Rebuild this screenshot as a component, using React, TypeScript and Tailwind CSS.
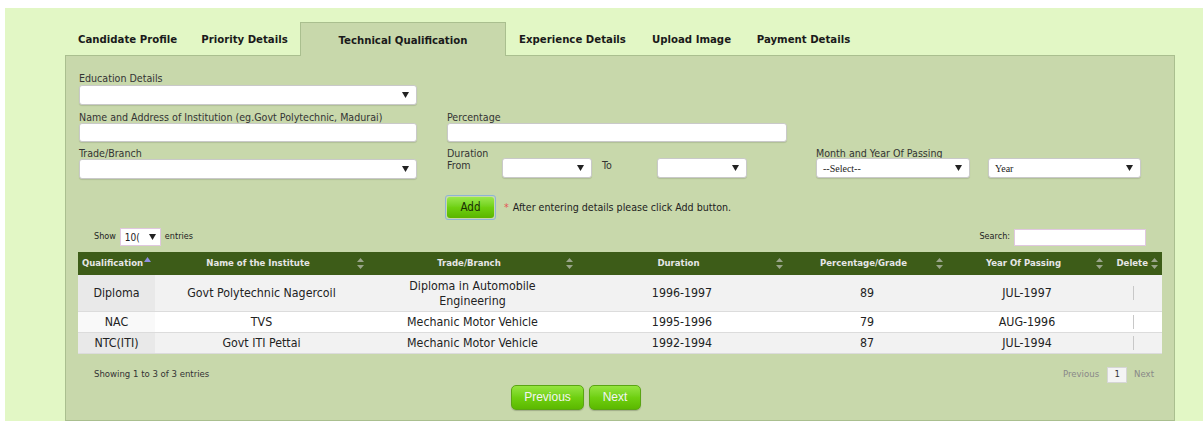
import React from 'react';

const font = { fontFamily: '"DejaVu Sans Condensed", "DejaVu Sans", Tahoma, sans-serif' };

const tabs = [
  { label: 'Candidate Profile', w: 'w-[123px]' },
  { label: 'Priority Details', w: 'w-[111px]' },
  { label: 'Technical Qualification', w: 'w-[206px]', active: true },
  { label: 'Experience Details', w: 'w-[133px]' },
  { label: 'Upload Image', w: 'w-[105px]' },
  { label: 'Payment Details', w: 'w-[119px]' },
];

const rows = [
  { q: 'Diploma', inst: 'Govt Polytechnic Nagercoil', trade: 'Diploma in Automobile Engineering', dur: '1996-1997', pct: '89', year: 'JUL-1997' },
  { q: 'NAC', inst: 'TVS', trade: 'Mechanic Motor Vehicle', dur: '1995-1996', pct: '79', year: 'AUG-1996' },
  { q: 'NTC(ITI)', inst: 'Govt ITI Pettai', trade: 'Mechanic Motor Vehicle', dur: '1992-1994', pct: '87', year: 'JUL-1994' },
];

function Arrow() {
  return (
    <svg width="7" height="6" viewBox="0 0 7 6" className="shrink-0">
      <path d="M0 0h7L3.5 6z" fill="#222" />
    </svg>
  );
}

function SortIcon() {
  return (
    <svg width="7" height="11" viewBox="0 0 7 11" className="shrink-0">
      <path d="M3.5 0L7 4H0z" fill="#9aa58a" />
      <path d="M0 7h7L3.5 11z" fill="#9aa58a" />
    </svg>
  );
}

function Select({ w, text, serif }: { w: string; text?: string; serif?: boolean }) {
  return (
    <div className={`${w} h-[20px] bg-white border border-[#c9c9c9] rounded-[3px] shadow-[0_1px_1px_rgba(0,0,0,0.12)] flex items-center pl-[6px] pr-[7px] justify-between`}>
      <span
        className="text-[10px] text-[#222]"
        style={serif ? { fontFamily: '"Liberation Serif", "DejaVu Serif", serif' } : undefined}
      >
        {text}
      </span>
      <Arrow />
    </div>
  );
}

function Input({ w }: { w: string }) {
  return <div className={`${w} h-[19px] bg-white border border-[#c9c9c9] rounded-[3px] shadow-[0_1px_1px_rgba(0,0,0,0.12)]`} />;
}

function Label({ children }: { children: React.ReactNode }) {
  return <div className="text-[10.6px] leading-[12px] text-[#333]">{children}</div>;
}

function GreenButton({ children, w }: { children: React.ReactNode; w: string }) {
  return (
    <div
      className={`${w} h-[25px] rounded-[5px] bg-gradient-to-b from-[#95e53e] via-[#6fd010] to-[#5bb800] border border-[#5aa514] flex items-center justify-center text-[12px] text-[#f4f4f4] shadow-[0_1px_1px_rgba(0,0,0,0.2)]`}
      style={{ fontFamily: '"Liberation Sans", Arial, sans-serif' }}
    >
      {children}
    </div>
  );
}

export default function App() {
  return (
    <div className="bg-white w-[1203px] h-[421px] pt-[8px] pl-[5px] overflow-hidden" style={font}>
      <div className="bg-[#e2f7c5] h-[413px] pl-[60px] pt-[14px]">
        {/* tab strip */}
        <div className="flex h-[33px] items-stretch">
          <div className="w-[1px]" />
          {tabs.map((t) =>
            t.active ? (
              <div key={t.label} className={`${t.w} bg-[#c8d8ab] border border-b-0 border-[#aabf8f] flex items-center justify-center pt-[4px] text-[11.3px] font-bold text-[#1a1a1a] relative z-10 -mb-[1px]`}>
                {t.label}
              </div>
            ) : (
              <div key={t.label} className={`${t.w} flex items-center justify-center pt-[4px] text-[11.3px] font-bold text-[#1a1a1a]`}>
                {t.label}
              </div>
            )
          )}
        </div>

        {/* panel */}
        <div className="w-[1110px] h-[366px] bg-[#c8d8ab] border border-[#aabf8f] px-[12px] pt-[16px]">
          <div className="pl-[1px]">
            <Label>Education Details</Label>
            <div className="mt-[1px]">
              <Select w="w-[338px]" />
            </div>

            <div className="flex mt-[6px]">
              <div className="w-[368px]">
                <Label>Name and Address of Institution (eg.Govt Polytechnic, Madurai)</Label>
                <Input w="w-[338px]" />
              </div>
              <div>
                <Label>Percentage</Label>
                <Input w="w-[340px]" />
              </div>
            </div>

            <div className="flex mt-[5px]">
              <div className="w-[368px]">
                <Label>Trade/Branch</Label>
                <Select w="w-[338px]" />
              </div>
              <div className="w-[369px]">
                <Label>Duration</Label>
                <div className="flex items-start -mt-[1px]">
                  <div className="w-[55px] pt-[1px]">
                    <Label>From</Label>
                  </div>
                  <Select w="w-[90px]" />
                  <div className="w-[65px] pl-[10px] pt-[1px]">
                    <Label>To</Label>
                  </div>
                  <Select w="w-[90px]" />
                </div>
              </div>
              <div>
                <Label>Month and Year Of Passing</Label>
                <div className="flex -mt-[1px] gap-[18px]">
                  <Select w="w-[154px]" text="--Select--" serif />
                  <Select w="w-[153px]" text="Year" serif />
                </div>
              </div>
            </div>

            {/* add row */}
            <div className="flex items-center mt-[16px] ml-[366px]">
              <div className="border border-[#8eb3d6] rounded-[3px] p-[1px]">
                <div className="w-[47px] h-[21px] rounded-[3px] bg-gradient-to-b from-[#9ae84a] via-[#6fd010] to-[#5ab500] flex items-center justify-center text-[11.5px] text-[#1a2e05]">
                  Add
                </div>
              </div>
              <span className="ml-[8px] text-[#e25555] text-[10.6px]">*</span>
              <span className="ml-[4px] text-[10.6px] text-[#222]">After entering details please click Add button.</span>
            </div>
          </div>

          {/* entries / search */}
          <div className="flex items-center justify-between mt-[8px] h-[18px] pl-[16px] pr-[16px] text-[9px] text-[#222]">
            <div className="flex items-center">
              <span>Show</span>
              <div className="ml-[4px] w-[41px] h-[18px] bg-white border border-[#e0c8e0] flex items-center justify-between px-[4px]">
                <span className="text-[10px]">10(</span>
                <Arrow />
              </div>
              <span className="ml-[4px]">entries</span>
            </div>
            <div className="flex items-center">
              <span>Search:</span>
              <div className="ml-[4px] w-[132px] h-[17px] bg-white border border-[#e0c8e0]" />
            </div>
          </div>

          {/* table */}
          <table className="mt-[6px] w-[1084px] border-collapse table-fixed">
            <colgroup>
              <col className="w-[77px]" />
              <col className="w-[213px]" />
              <col className="w-[209px]" />
              <col className="w-[210px]" />
              <col className="w-[160px]" />
              <col className="w-[160px]" />
              <col className="w-[55px]" />
            </colgroup>
            <thead>
              <tr className="bg-[#3d5c18] h-[23px] text-[9.5px] font-bold text-[#e6e6e6]">
                <th className="pl-[4px] text-left">
                  <div className="flex items-start gap-[1px]">
                    <span>Qualification</span>
                    <svg width="7" height="6" viewBox="0 0 7 6" className="mt-[1px]">
                      <path d="M3.5 0L7 5H0z" fill="#8f8fe0" />
                    </svg>
                  </div>
                </th>
                {['Name of the Institute', 'Trade/Branch', 'Duration', 'Percentage/Grade', 'Year Of Passing'].map((h) => (
                  <th key={h} className="px-[4px]">
                    <div className="flex items-center">
                      <span className="flex-1 text-center">{h}</span>
                      <SortIcon />
                    </div>
                  </th>
                ))}
                <th className="pr-[4px]">
                  <div className="flex items-center justify-end gap-[3px]">
                    <span>Delete</span>
                    <SortIcon />
                  </div>
                </th>
              </tr>
            </thead>
            <tbody className="text-[12.3px] text-[#222]">
              {rows.map((r, i) => (
                <tr
                  key={r.q}
                  className={`${i === 0 ? 'h-[36px]' : 'h-[21px]'} ${i % 2 === 0 ? 'bg-[#f2f2f2]' : 'bg-white'} border-b border-[#dcdcdc] text-center leading-[15px]`}
                >
                  <td className={`pt-[2px] ${i % 2 === 0 ? 'bg-[#e9e9e9]' : 'bg-[#f9f9f9]'}`}>{r.q}</td>
                  <td className="pt-[2px]">{r.inst}</td>
                  <td className="pt-[2px] px-[22px]">{r.trade}</td>
                  <td className="pt-[2px]">{r.dur}</td>
                  <td className="pt-[2px]">{r.pct}</td>
                  <td className="pt-[2px]">{r.year}</td>
                  <td>
                    <div className="ml-[26px] w-[1px] h-[14px] bg-[#c8c8c8]" />
                  </td>
                </tr>
              ))}
            </tbody>
          </table>

          {/* info and pager */}
          <div className="flex items-center justify-between mt-[13px] pl-[16px] pr-[8px] text-[9.5px]">
            <span className="text-[#333]">Showing 1 to 3 of 3 entries</span>
            <div className="flex items-center text-[#888]">
              <span>Previous</span>
              <div className="ml-[8px] w-[20px] h-[16px] bg-[#f4f4f4] border border-[#d6d6d6] flex items-center justify-center text-[#333]">
                1
              </div>
              <span className="ml-[7px]">Next</span>
            </div>
          </div>

          <div className="flex gap-[5px] ml-[433px] mt-[2px]">
            <GreenButton w="w-[73px]">Previous</GreenButton>
            <GreenButton w="w-[52px]">Next</GreenButton>
          </div>
        </div>
      </div>
    </div>
  );
}
